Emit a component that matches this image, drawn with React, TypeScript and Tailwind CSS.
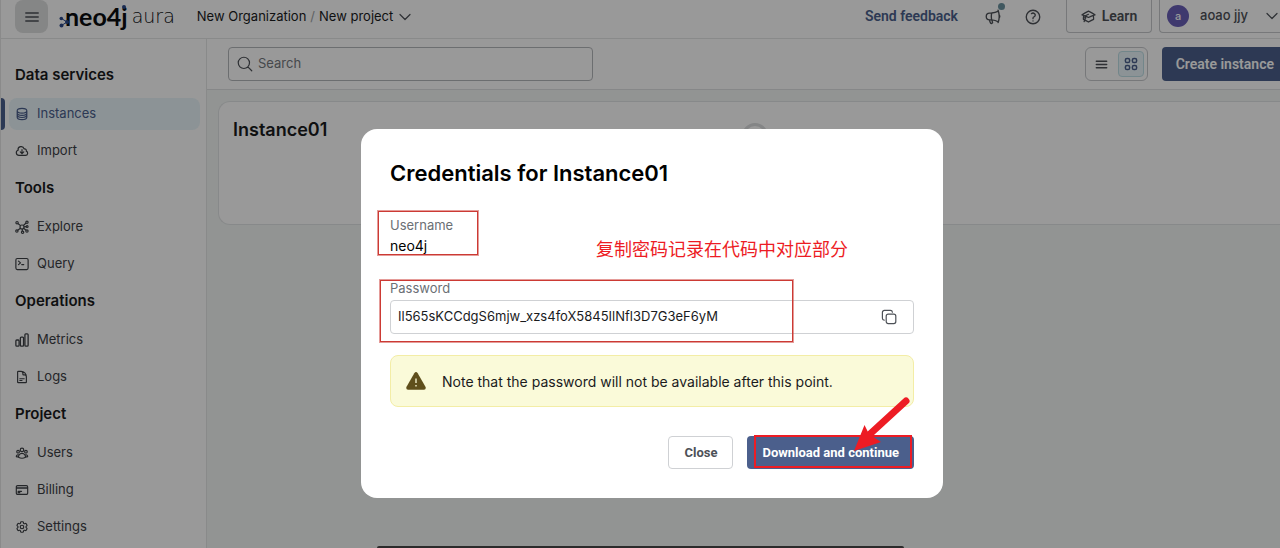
import type { ReactNode } from "react";
import {
  HiOutlineAcademicCap,
  HiOutlineBars3,
  HiOutlineCircleStack,
  HiOutlineCloudArrowDown,
  HiOutlineCog6Tooth,
  HiOutlineCreditCard,
  HiOutlineDocumentText,
  HiOutlineMagnifyingGlass,
  HiOutlineMegaphone,
  HiOutlineQuestionMarkCircle,
  HiOutlineUserGroup,
  HiOutlineChevronDown,
} from "react-icons/hi2";

function GraphIcon() {
  return (
    <svg viewBox="0 0 24 24" className="size-[14px]" fill="none" stroke="currentColor" strokeWidth="2">
      <circle cx="12" cy="12" r="3.4" />
      <circle cx="3.5" cy="4.5" r="2" />
      <circle cx="20.5" cy="3.8" r="2" />
      <circle cx="3.2" cy="19" r="2" />
      <circle cx="13" cy="21" r="2" />
      <circle cx="20.5" cy="19" r="2" />
      <circle cx="20.8" cy="11" r="1.6" />
      <path d="M5 6l4.4 3.6M19 5.2l-4.6 4.2M4.6 17.6l4.8-3.4M12.5 15.4v3.4M14.8 14.2l4.2 3.4M15.4 11.7l3.6-.4" />
    </svg>
  );
}

function QueryIcon() {
  return (
    <svg viewBox="0 0 24 24" className="size-[14px]" fill="none" stroke="currentColor" strokeWidth="2" strokeLinecap="round" strokeLinejoin="round">
      <rect x="1.5" y="2.5" width="21" height="19" rx="2.5" />
      <path d="M6 7l3.5 3L6 13M11.5 13h3.5" />
    </svg>
  );
}

function BarsIcon() {
  return (
    <svg viewBox="0 0 24 24" className="size-[14px]" fill="none" stroke="currentColor" strokeWidth="2.2" strokeLinejoin="round">
      <rect x="1.5" y="12" width="5.5" height="10.5" rx="1.5" />
      <rect x="9.2" y="7" width="5.5" height="15.5" rx="1.5" />
      <rect x="17" y="1.5" width="5.5" height="21" rx="1.5" />
    </svg>
  );
}

function TilesIcon() {
  return (
    <svg viewBox="0 0 14 14" className="size-[14px]" fill="none" stroke="currentColor" strokeWidth="1.5">
      <rect x="1.4" y="1.4" width="4.2" height="4.2" rx="1.6" />
      <rect x="8.4" y="1.4" width="4.2" height="4.2" rx="1.6" />
      <rect x="1.4" y="8.4" width="4.2" height="4.2" rx="1.6" />
      <rect x="8.4" y="8.4" width="4.2" height="4.2" rx="1.6" />
    </svg>
  );
}

function CopyIcon() {
  return (
    <svg viewBox="0 0 16 16" className="size-4" fill="none" stroke="currentColor" strokeWidth="1.2">
      <rect x="5.2" y="5.2" width="9.6" height="9.4" rx="2" />
      <path d="M3.200 11.200A2 2 0 0 1 1.400 9.200V3.400A2 2 0 0 1 3.400 1.400H9.400A2 2 0 0 1 11.400 3.200" strokeLinecap="round" />
    </svg>
  );
}

function Logo() {
  return (
    <a href="#home" aria-label="neo4j aura" className="relative flex h-[31px] items-center pl-[6px] text-[#0b0d10]">
      <svg viewBox="0 0 11 12" className="absolute top-4 left-0 h-3 w-[11px] fill-[#2c4a8a] stroke-[#2c4a8a]">
        <path d="M2.500 2.500L8 6L2.500 9.500" fill="none" strokeWidth="1" />
        <circle cx="2.300" cy="2.500" r="1.800" stroke="none" />
        <circle cx="8" cy="6" r="2" stroke="none" />
        <circle cx="2.500" cy="9.500" r="2" stroke="none" />
      </svg>
      <span className="font-['Lato'] text-[25px] leading-7 font-bold">neo4j</span>
      <svg viewBox="0 0 4 4" className="absolute top-[5px] left-[63px] size-1 fill-[#2c4a8a]">
        <circle cx="2" cy="2" r="2" />
      </svg>
      <span className="ml-1 font-['DejaVu_Sans'] text-[19px] leading-7 font-extralight">aura</span>
    </a>
  );
}

type Item = { label: string; icon: ReactNode; active?: boolean };

const sections: { title: string; items: Item[] }[] = [
  {
    title: "Data services",
    items: [
      { label: "Instances", icon: <HiOutlineCircleStack size={14} strokeWidth={2} />, active: true },
      { label: "Import", icon: <HiOutlineCloudArrowDown size={14} strokeWidth={2} /> },
    ],
  },
  {
    title: "Tools",
    items: [
      { label: "Explore", icon: <GraphIcon /> },
      { label: "Query", icon: <QueryIcon /> },
    ],
  },
  {
    title: "Operations",
    items: [
      { label: "Metrics", icon: <BarsIcon /> },
      { label: "Logs", icon: <HiOutlineDocumentText size={14} strokeWidth={2} /> },
    ],
  },
  {
    title: "Project",
    items: [
      { label: "Users", icon: <HiOutlineUserGroup size={14} strokeWidth={2} /> },
      { label: "Billing", icon: <HiOutlineCreditCard size={14} strokeWidth={2} /> },
      { label: "Settings", icon: <HiOutlineCog6Tooth size={14} strokeWidth={2} /> },
    ],
  },
];

function Header() {
  return (
    <header className="flex h-[39px] items-start border-b border-[#e4e6e7] pl-[14px]">
      <button aria-label="Menu" className="flex h-[33px] w-[33px] items-center justify-center rounded-lg bg-[#dedfe0] text-[#4d5157]">
        <HiOutlineBars3 size={18} strokeWidth={2} />
      </button>
      <div className="ml-[11px]">
        <Logo />
      </div>
      <nav aria-label="Breadcrumb" className="ml-[22px] flex h-[34px] items-center text-[13px] text-[#1a1b1d]">
        <a href="#organization">New Organization</a>
        <span className="mx-1 text-[#a0a3a7]">/</span>
        <a href="#project">New project</a>
        <HiOutlineChevronDown size={16} strokeWidth={1.8} className="ml-[4px] text-[#4d5157]" />
      </nav>
      <div className="ml-auto flex h-[33px] items-center font-['Roboto',sans-serif] text-[14px] font-semibold text-[#4d5157]">
        <a href="#feedback" className="text-[#4b5f8c]">Send feedback</a>
        <button aria-label="Announcements" className="relative ml-[26px]">
          <HiOutlineMegaphone size={18} strokeWidth={1.8} />
          <span className="absolute -top-[5px] -right-[3px] size-[7px] rounded-full bg-[#6c93a0]" />
        </button>
        <button aria-label="Help" className="ml-[22px]">
          <HiOutlineQuestionMarkCircle size={18} strokeWidth={1.8} />
        </button>
        <button className="ml-6 flex h-[33px] w-[86px] items-center justify-center gap-[6px] rounded-b border border-t-0 border-[#c6c9cc]">
          <HiOutlineAcademicCap size={15} strokeWidth={2} />
          Learn
        </button>
        <button className="ml-[7px] flex h-[33px] w-[121px] items-center rounded-bl border border-t-0 border-r-0 border-[#c6c9cc] pl-[7px] font-['Inter',sans-serif] text-[13px] font-medium">
          <span className="flex size-[22px] items-center justify-center rounded-full bg-[#6a5fb8] text-[11px] text-white">a</span>
          <span className="ml-[11px]">aoao jjy</span>
          <HiOutlineChevronDown size={16} strokeWidth={1.8} className="ml-auto" />
        </button>
      </div>
    </header>
  );
}

function Sidebar() {
  return (
    <nav aria-label="Main" className="flex w-[206px] shrink-0 flex-col gap-[11px] border-r border-[#e4e6e7] pt-[26px]">
      {sections.map((section) => (
        <section key={section.title}>
          <h2 className="pl-[14px] text-[15px] leading-5 font-semibold text-[#1a1b1d]">{section.title}</h2>
          <ul className="mt-[13px] flex flex-col gap-[5px]">
            {section.items.map((item) => (
              <li key={item.label} className="flex items-stretch gap-1">
                <span className={item.active ? "w-[4px] rounded-r bg-[#4b5f8c]" : "w-[4px]"} />
                <a
                  href={"#" + item.label.toLowerCase()}
                  className={
                    item.active
                      ? "mr-[6px] flex h-8 flex-1 items-center gap-2 rounded-lg bg-[#e9f6fb] pl-[6px] text-[13px] text-[#4b5f8c]"
                      : "mr-[6px] flex h-8 flex-1 items-center gap-2 rounded-lg pl-[6px] text-[13px] text-[#3d4045]"
                  }
                >
                  {item.icon}
                  {item.label}
                </a>
              </li>
            ))}
          </ul>
        </section>
      ))}
    </nav>
  );
}

function Content() {
  return (
    <main className="flex min-w-0 flex-1 flex-col bg-[#f3f7f5]">
      <div className="flex h-[51px] shrink-0 items-center border-b border-[#dfe2e3] bg-white pl-[21px]">
        <label className="flex h-[34px] w-[365px] items-center gap-1 rounded border border-[#b5b8bb] px-[7px] text-[#4d5157]">
          <HiOutlineMagnifyingGlass size={18} strokeWidth={1.6} />
          <input type="search" aria-label="Search" placeholder="Search" className="min-w-0 flex-1 bg-transparent text-[13px] outline-none placeholder:text-[#75797e]" />
        </label>
        <div className="ml-auto flex h-[34px] items-center gap-[3px] rounded-md border border-[#c6c9cc] px-[3px]">
          <button aria-label="List view" className="flex size-[26px] items-center justify-center text-[#4d5157]">
            <HiOutlineBars3 size={15} strokeWidth={2.4} />
          </button>
          <button aria-label="Tile view" className="flex size-[26px] items-center justify-center rounded border border-[#bfdfe6] bg-[#e9f6fb] text-[#4b5f8c]">
            <TilesIcon />
          </button>
        </div>
        <button className="ml-[14px] h-[34px] rounded-l bg-[#4b5f8c] pr-[6px] pl-[14px] font-['Roboto',sans-serif] text-[14px] font-semibold text-white">
          Create instance
        </button>
      </div>
      <article className="mt-[11px] ml-[11px] h-[124px] rounded-l-xl border border-r-0 border-[#e2e5e6] bg-white pt-[17px] pl-[14px]">
        <h3 className="text-[18px] leading-[22px] font-semibold text-[#1a1b1d]">Instance01</h3>
        <div className="-mt-[18px] flex justify-center pr-1">
          <span className="size-[26px] rounded-full border-3 border-[#dcdedf]" />
        </div>
      </article>
    </main>
  );
}

function CredentialsDialog() {
  return (
    <div role="dialog" aria-modal="true" aria-labelledby="dialog-title" className="relative w-[582px] rounded-2xl bg-white px-[29px] pt-[30px] pb-[29px] text-[#1a1b1d]">
      <h1 id="dialog-title" className="text-[22px] leading-7 font-semibold text-black">Credentials for Instance01</h1>
      <dl className="mt-7">
        <dt className="text-[13px] leading-5 text-[#6b6f75]">Username</dt>
        <dd className="text-[14px] leading-[22px] text-black">neo4j</dd>
      </dl>
      <label htmlFor="password" className="mt-5 block text-[13px] leading-[22px] text-[#6b6f75]">Password</label>
      <div className="mt-px flex h-[34px] items-center rounded border border-[#cfd1d4] pr-4 pl-[7px]">
        <input id="password" readOnly defaultValue="Il565sKCCdgS6mjw_xzs4foX5845IlNfl3D7G3eF6yM" className="min-w-0 flex-1 text-[13px] outline-none" />
        <button aria-label="Copy password" className="text-[#4d5157]">
          <CopyIcon />
        </button>
      </div>
      <div role="alert" className="mt-[21px] flex h-[52px] items-center gap-4 rounded-lg border border-[#f3eda6] bg-[#fafad9] pl-[15px] text-[14px]">
        <svg viewBox="0 0 20 18" className="h-[18px] w-5">
          <path d="M8.3 1.2Q10-1 11.7 1.2L19.6 15Q20.2 17.6 18 17.8H2Q-.2 17.6.4 15Z" fill="#5f4f1c" />
          <path d="M10 6.5v4.6M10 13v1.6" stroke="#fafad9" strokeWidth="1.3" />
        </svg>
        Note that the password will not be available after this point.
      </div>
      <div className="mt-[29px] flex justify-end gap-[14px] font-['Roboto',sans-serif] text-[13px] font-bold">
        <button className="h-[33px] rounded border border-[#cfd1d4] px-[15px] text-[#4d5157]">Close</button>
        <button className="h-[33px] rounded bg-[#4b5f8c] px-[15px] text-white">Download and continue</button>
      </div>

      <div className="pointer-events-none absolute top-[82px] left-[17px] h-[44px] w-[100px] border border-[#cc3a34] ring-1 ring-[#cc3a34]/50" />
      <div className="pointer-events-none absolute top-[151px] left-[19px] h-[62px] w-[413px] border border-[#cc3a34] ring-1 ring-[#cc3a34]/50" />
      <p className="absolute top-[107px] left-[235px] font-['Noto_Sans_CJK_SC',sans-serif] text-[18px] leading-6 text-[#ed1c24]">复制密码记录在代码中对应部分</p>
      <div className="pointer-events-none absolute top-[306px] left-[393px] h-[33px] w-[158px] border-2 border-[#ed1c24]" />
      <svg viewBox="0 0 58 56" className="pointer-events-none absolute top-[267px] left-[492px] h-14 w-[58px]">
        <path d="M53 5L17 38" stroke="#ed1c24" strokeWidth="7" strokeLinecap="round" />
        <path d="M1 55L11.500 29L16 38L28 46Z" fill="#ed1c24" />
      </svg>
    </div>
  );
}

export default function App() {
  return (
    <div className="relative flex h-screen flex-col overflow-hidden border-l border-[#8a8a8a] bg-white font-['Inter',sans-serif]">
      <Header />
      <div className="flex min-h-0 flex-1">
        <Sidebar />
        <Content />
      </div>
      <div className="absolute inset-0 flex items-start justify-center bg-black/40 pt-[129px] pl-[23px]">
        <CredentialsDialog />
      </div>
      <div className="absolute inset-x-[376px] bottom-0 h-[2px] rounded-t-sm bg-[#2b2b2b]" />
    </div>
  );
}
